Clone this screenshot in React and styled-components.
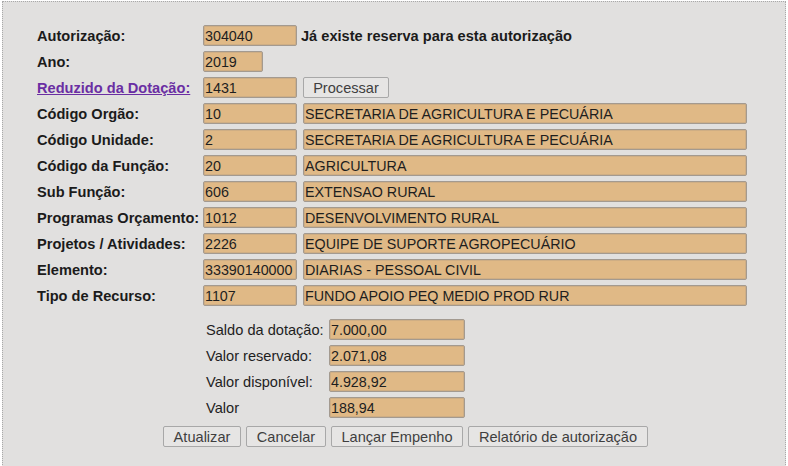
import styled, { createGlobalStyle } from "styled-components";

const GlobalStyle = createGlobalStyle`
  html, body {
    margin: 0;
    padding: 0;
    background: #ffffff;
    height: 100%;
    overflow: hidden;
  }
  body {
    font-family: "Liberation Sans", Arial, sans-serif;
  }
`;

// lines of the allocation table: label, code, description
const dotacao = [
  { label: "Código Orgão:", code: "10", desc: "SECRETARIA DE AGRICULTURA E PECUÁRIA" },
  { label: "Código Unidade:", code: "2", desc: "SECRETARIA DE AGRICULTURA E PECUÁRIA" },
  { label: "Código da Função:", code: "20", desc: "AGRICULTURA" },
  { label: "Sub Função:", code: "606", desc: "EXTENSAO RURAL" },
  { label: "Programas Orçamento:", code: "1012", desc: "DESENVOLVIMENTO RURAL" },
  { label: "Projetos / Atividades:", code: "2226", desc: "EQUIPE DE SUPORTE AGROPECUÁRIO" },
  { label: "Elemento:", code: "33390140000", desc: "DIARIAS - PESSOAL CIVIL" },
  { label: "Tipo de Recurso:", code: "1107", desc: "FUNDO APOIO PEQ MEDIO PROD RUR" },
];

const saldos = [
  { label: "Saldo da dotação:", value: "7.000,00" },
  { label: "Valor reservado:", value: "2.071,08" },
  { label: "Valor disponível:", value: "4.928,92" },
  { label: "Valor", value: "188,94" },
];

const App = () => {
  return (
    <>
      <GlobalStyle />
      <Panel>
        <Form>
          <Label>Autorização:</Label>
          <Inline>
            <Field $width={94} readOnly value="304040" />
            <Warning>Já existe reserva para esta autorização</Warning>
          </Inline>

          <Label>Ano:</Label>
          <Inline>
            <Field $width={60} readOnly value="2019" />
          </Inline>

          <Label>
            <LabelLink href="#">Reduzido da Dotação:</LabelLink>
          </Label>
          <Inline>
            <Field $width={94} readOnly value="1431" />
            <Button $width={86}>Processar</Button>
          </Inline>

          {dotacao.map((row) => (
            <Row key={row.label}>
              <Label>{row.label}</Label>
              <Inline>
                <Field $width={94} readOnly value={row.code} />
                <Field $width={444} readOnly value={row.desc} />
              </Inline>
            </Row>
          ))}
        </Form>

        <Totals>
          {saldos.map((row) => (
            <Row key={row.label}>
              <SmallLabel>{row.label}</SmallLabel>
              <Field $width={136} readOnly value={row.value} />
            </Row>
          ))}
        </Totals>

        <Actions>
          <Button $width={78}>Atualizar</Button>
          <Button $width={80}>Cancelar</Button>
          <Button $width={132}>Lançar Empenho</Button>
          <Button $width={180}>Relatório de autorização</Button>
        </Actions>
      </Panel>
    </>
  );
};

export default App;

const Panel = styled.div`
  box-sizing: border-box;
  margin: 1px 0 0 2px;
  width: 784px;
  height: 470px;
  background: #e1e0df;
  border: 1px dotted #a9a9a9;
  border-bottom: none;
  padding: 23px 0 0 34px;
`;

const Form = styled.div`
  display: grid;
  grid-template-columns: 166px auto;
  grid-auto-rows: 21px;
  row-gap: 5px;
  align-items: center;
`;

const Row = styled.div`
  display: contents;
`;

const Label = styled.div`
  font-size: 14.6px;
  font-weight: bold;
  color: #1b1b1b;
  white-space: nowrap;
`;

const LabelLink = styled.a`
  color: #6a2ea3;
  text-decoration: underline;
`;

const Inline = styled.div`
  display: flex;
  align-items: center;
  gap: 6px;
  height: 21px;
`;

const Field = styled.input`
  box-sizing: border-box;
  width: ${(p) => p.$width}px;
  height: 21px;
  margin: 0;
  padding: 1px 1px 0;
  background: #e0b986;
  border: 1px solid #a39a90;
  border-radius: 2px;
  box-shadow: inset 0 0 0 1px #cfae84;
  font-family: "Liberation Sans", Arial, sans-serif;
  font-size: 14.3px;
  color: #1e1e1e;
  outline: none;
`;

const Warning = styled.span`
  margin-left: -2px;
  font-size: 14.6px;
  font-weight: bold;
  color: #1b1b1b;
  white-space: nowrap;
`;

const Button = styled.button`
  box-sizing: border-box;
  width: ${(p) => p.$width}px;
  height: 21px;
  margin: 0;
  padding: 0;
  background: #e6e5e4;
  border: 1px solid #a8a8a8;
  border-radius: 2px;
  font-family: "Liberation Sans", Arial, sans-serif;
  font-size: 14.6px;
  color: #3f3f3f;
  cursor: pointer;
`;

const Totals = styled.div`
  display: grid;
  grid-template-columns: 123px auto;
  grid-auto-rows: 21px;
  row-gap: 5px;
  align-items: center;
  margin: 13px 0 0 169px;
`;

const SmallLabel = styled.div`
  font-size: 14.6px;
  color: #1e1e1e;
  white-space: nowrap;
`;

const Actions = styled.div`
  display: flex;
  gap: 5px;
  margin: 8px 0 0 126px;
`;
